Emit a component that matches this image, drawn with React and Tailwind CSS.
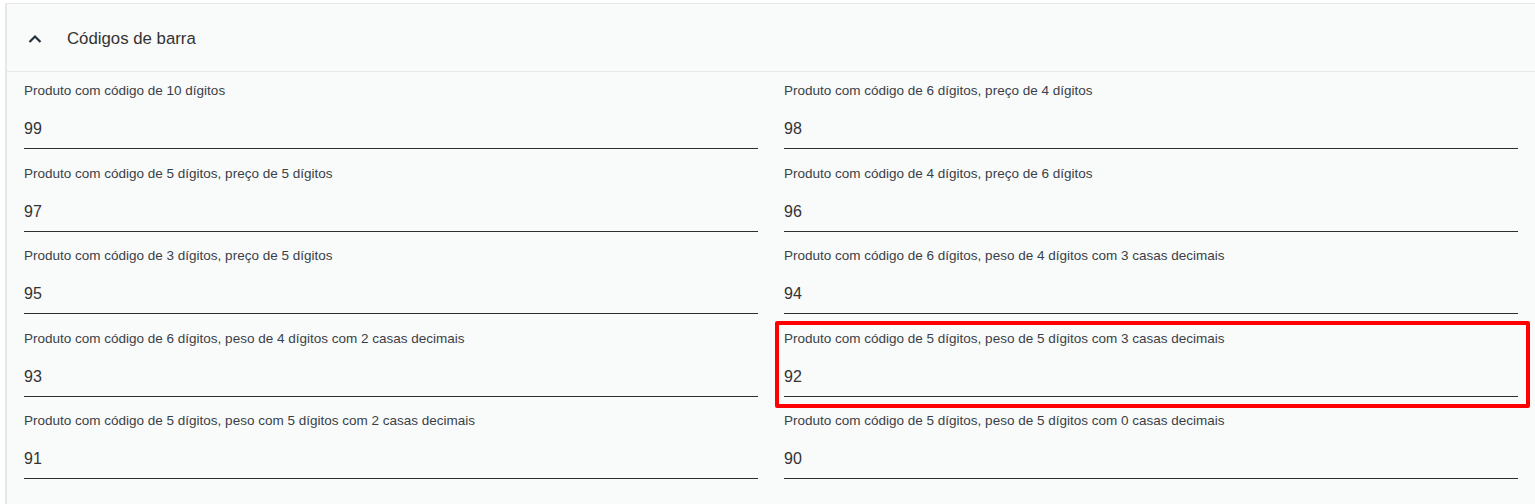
const fields = [
  { label: "Produto com código de 10 dígitos", value: "99" },
  { label: "Produto com código de 6 dígitos, preço de 4 dígitos", value: "98" },
  { label: "Produto com código de 5 dígitos, preço de 5 dígitos", value: "97" },
  { label: "Produto com código de 4 dígitos, preço de 6 dígitos", value: "96" },
  { label: "Produto com código de 3 dígitos, preço de 5 dígitos", value: "95" },
  { label: "Produto com código de 6 dígitos, peso de 4 dígitos com 3 casas decimais", value: "94" },
  { label: "Produto com código de 6 dígitos, peso de 4 dígitos com 2 casas decimais", value: "93" },
  { label: "Produto com código de 5 dígitos, peso de 5 dígitos com 3 casas decimais", value: "92", highlight: true },
  { label: "Produto com código de 5 dígitos, peso com 5 dígitos com 2 casas decimais", value: "91" },
  { label: "Produto com código de 5 dígitos, peso de 5 dígitos com 0 casas decimais", value: "90" },
];

function Field({ label, value, highlight }) {
  return (
    <div className="relative pt-[12px]">
      <label className="block text-[13.5px] leading-[14px] text-[#3a3f47] mb-[21px] whitespace-nowrap">{label}</label>
      <div className="h-[20px] text-[16px] leading-[20px] text-[#333]">{value}</div>
      <div className="h-[9px]"></div>
      <div className="h-px bg-[#2b2f33]"></div>
      {highlight && (
        <div className="absolute top-[1px] -bottom-[11px] -left-[9px] -right-[12px] border-4 border-[#ff0000] rounded-[2px] pointer-events-none"></div>
      )}
    </div>
  );
}

export default function App() {
  return (
    <div className="w-[1535px] h-[504px] bg-white font-['Liberation_Sans',Arial,sans-serif] overflow-hidden">
      <div className="ml-[5px] mt-[3px] h-[501px] bg-[#f9fafa] border-l-2 border-t border-[#e6e8e8]">
        <div className="h-[68px] pt-[2px] flex items-center border-b border-[#e6e8e8]">
          <svg className="ml-[21px] w-[14px] h-[10px]" viewBox="0 0 14 10" fill="none">
            <path d="M1.5 8 L7 2.5 L12.5 8" stroke="#27313d" strokeWidth="2.2" />
          </svg>
          <span className="ml-[25px] text-[16.8px] text-[#333]">Códigos de barra</span>
        </div>
        <div className="grid grid-cols-2 gap-x-[26px] gap-y-[5.5px] px-[17px]">
          {fields.map((f) => (
            <Field key={f.value} {...f} />
          ))}
        </div>
      </div>
    </div>
  );
}
